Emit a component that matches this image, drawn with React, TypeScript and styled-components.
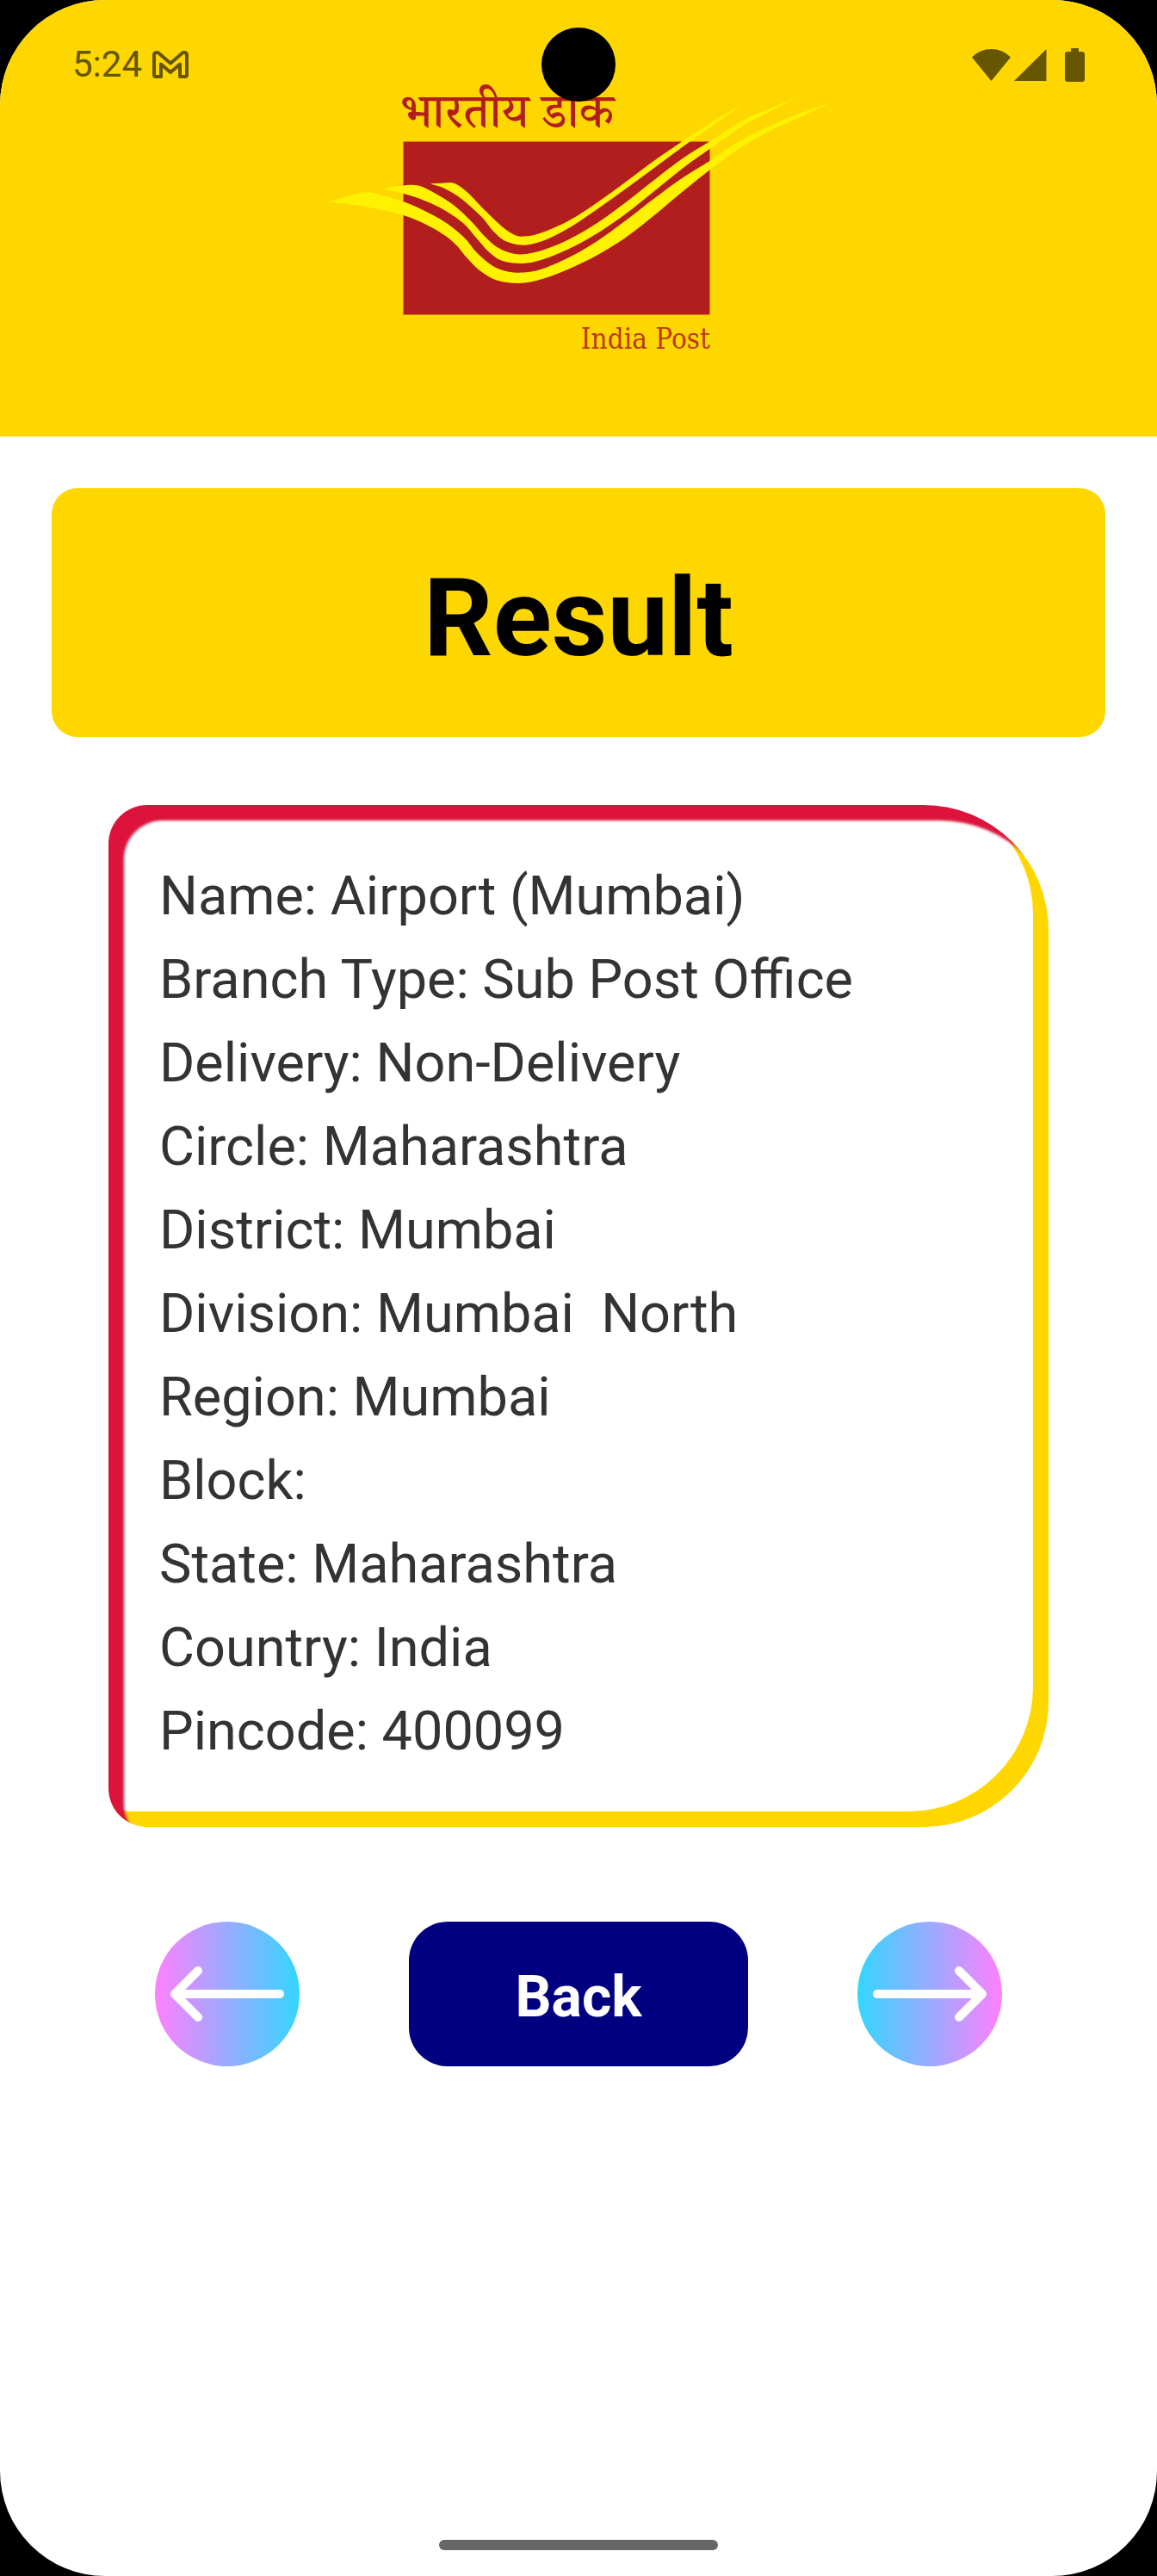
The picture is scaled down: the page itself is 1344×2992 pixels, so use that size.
import React from "react";
import styled, { createGlobalStyle } from "styled-components";

const GOLD = "#ffd700";
const STATUS = "#665600";
const POST_RED = "#b11e1d";

const GlobalStyle = createGlobalStyle`
  * { box-sizing: border-box; }
  body { margin: 0; background: #000; }
`;

const Screen = styled.div`
  position: relative;
  display: flex;
  flex-direction: column;
  min-height: 100vh;
  overflow: hidden;
  background: #fff;
  border-radius: 122px;
  font-family: Roboto, "Noto Sans", sans-serif;
`;

const StatusBar = styled.div`
  position: absolute;
  inset: 0 0 auto;
  z-index: 1;
  display: flex;
  align-items: center;
  justify-content: space-between;
  height: 150px;
  padding: 0 84px;
  color: ${STATUS};
`;

const StatusGroup = styled.div`
  display: flex;
  align-items: center;
`;

const Clock = styled.time`
  margin-right: 12px;
  font-size: 42px;
  line-height: 50px;
`;

const Camera = styled.div`
  position: absolute;
  top: 32px;
  left: 50%;
  width: 86px;
  height: 86px;
  margin-left: -43px;
  border-radius: 50%;
  background: #000;
`;

const Header = styled.header`
  display: flex;
  justify-content: center;
  padding: 90px 0 93px;
  background: ${GOLD};
`;

const Logo = styled.svg`
  display: block;
  width: 588px;
  height: 324px;
`;

const Main = styled.main`
  display: flex;
  flex: 1;
  flex-direction: column;
  padding: 60px;
`;

const Title = styled.h1`
  margin: 0;
  padding: 67px 0 53px;
  border-radius: 30px;
  background: ${GOLD};
  color: #000;
  font-size: 126px;
  font-weight: 700;
  line-height: 169px;
  text-align: center;
`;

const Details = styled.ul`
  margin: 79px 66px 0;
  padding: 57px 60px 63px 59px;
  border-radius: 45px 145px 145px 45px;
  background: #fff;
  box-shadow: inset 18px 18px 3px #dc143c, inset -18px -18px 0 ${GOLD};
  color: #333;
  font-size: 63px;
  line-height: 97px;
  list-style: none;
`;

const Detail = styled.li`
  white-space: pre-wrap;
`;

const Controls = styled.nav`
  display: flex;
  align-items: stretch;
  justify-content: space-between;
  height: 168px;
  margin: 110px 120px 0;
`;

const RoundButton = styled.button<{ $from: string; $to: string }>`
  width: 168px;
  height: 168px;
  padding: 0;
  border: 0;
  border-radius: 50%;
  background: linear-gradient(90deg, ${(p) => p.$from}, ${(p) => p.$to});
  cursor: pointer;
  svg { display: block; }
`;

const BackButton = styled.button`
  padding: 6px 123px 0;
  border: 0;
  border-radius: 45px;
  background: #000080;
  color: #fff;
  font: 700 66px Roboto, sans-serif;
  cursor: pointer;
`;

const HomeIndicator = styled.div`
  align-self: center;
  width: 324px;
  height: 12px;
  margin-bottom: 30px;
  border-radius: 6px;
  background: #666;
`;

type Point = [number, number];

/* Runs a smooth curve through the points of one edge of a ribbon. */
function curve(points: Point[]): string {
  let d = "";
  for (let i = 0; i < points.length - 1; i++) {
    const p0 = points[i - 1] ?? points[i];
    const p1 = points[i];
    const p2 = points[i + 1];
    const p3 = points[i + 2] ?? p2;
    d += `C${p1[0] + (p2[0] - p0[0]) / 6} ${p1[1] + (p2[1] - p0[1]) / 6} ${p2[0] - (p3[0] - p1[0]) / 6} ${
      p2[1] - (p3[1] - p1[1]) / 6
    } ${p2[0]} ${p2[1]}`;
  }
  return d;
}

function ribbon(upper: Point[], lower: Point[]): string {
  return `M${upper[0][0]} ${upper[0][1]}${curve(upper)}${curve([upper[upper.length - 1], ...lower])}Z`;
}

const RIBBONS = [
  ribbon(
    [[500, 213.5], [514, 212.7], [528, 213], [543, 223.5], [563, 244], [583, 263], [597, 272.5], [608, 274.6], [627, 271], [660, 256.7], [693, 235.7], [727, 211.3], [760, 186.5], [793, 164], [827, 141.5], [861, 122.5]],
    [[827, 146.5], [800, 165.5], [760, 195], [727, 219.3], [693, 243.5], [660, 265.3], [630, 280], [607, 284.7], [587, 280], [573, 268.5], [560, 252.5], [537, 231.7], [517, 219.3], [500, 213.5]],
  ),
  ribbon(
    [[445, 219.3], [466, 215.7], [485, 215.3], [503, 223.3], [527, 238.3], [547, 256.7], [563, 274.5], [577, 286.7], [593, 293.8], [608, 295.2], [630, 290.7], [660, 278.5], [693, 259.5], [727, 235], [760, 209], [793, 184], [824, 164.5], [860, 141.7], [893, 126.5], [925, 114]],
    [[893, 130], [865, 145], [824, 173.3], [793, 195.5], [760, 222], [727, 248.3], [693, 271.5], [660, 289.5], [630, 301.5], [607, 306], [583, 302.7], [567, 291.7], [553, 276], [537, 258.3], [513, 242.3], [490, 231.7], [469, 225], [445, 219.3]],
  ),
  ribbon(
    [[381.5, 235], [403, 228], [425, 223.3], [443, 226.7], [469, 234.3], [497, 246.7], [520, 260], [540, 276.7], [553, 292.5], [570, 307.3], [585, 314.3], [603, 316.7], [627, 313.3], [660, 299.5], [693, 280.5], [727, 256], [760, 230.5], [793, 206.5], [824, 187.3], [860, 163.3], [893, 146.7], [927, 132.7], [964, 120]],
    [[927, 137], [893, 152.5], [860, 172], [824, 197.7], [793, 222.5], [760, 250], [727, 275.7], [693, 296.7], [660, 312.7], [630, 324], [603, 329], [577, 325.5], [557, 314], [542, 299], [527, 281.7], [503, 265], [470, 250.5], [430, 241], [403, 236.7], [381.5, 235]],
  ),
];

const PostLogo = () => (
  <Logo viewBox="378 90 588 324" role="img" aria-label="India Post">
    <text x="465" y="148" fill={POST_RED} fontSize="56" fontWeight="500" fontFamily='"Noto Serif Devanagari", "Noto Sans Devanagari", "Noto Sans", serif'>
      भारतीय डाक
    </text>
    <rect x="468.5" y="164.5" width="356" height="201" fill={POST_RED} />
    {RIBBONS.map((d) => (
      <path key={d} d={d} fill="#fff200" />
    ))}
    <text x="825" y="405" fill="#bd3717" fontSize="33" textAnchor="end" fontFamily='"DejaVu Serif Condensed", "Liberation Serif", serif'>
      India Post
    </text>
  </Logo>
);

const MailIcon = () => (
  <svg width="42" height="32" viewBox="0 0 42 32" fill="none" stroke="currentColor" strokeWidth="4" strokeLinejoin="round">
    <path d="M2 28V5Q2 2 5 2H6.500L21 14.500L35.500 2H37Q40 2 40 5V28Q40 30 38 30H32V15.500L21 25L10 15.500V30H4Q2 30 2 28Z" />
  </svg>
);

const SignalIcons = () => (
  <svg width="131" height="39" viewBox="0 0 131 39" fill="currentColor">
    <path d="M0 10.500Q9 1 22.500 1T45 10.500L22.500 38Z" />
    <path d="M49 38L86.500 1V38Z" />
    <path d="M115 0h9v4h4q3 0 3 3v29q0 3-3 3h-17q-3 0-3-3V7q0-3 3-3h4Z" />
  </svg>
);

const ArrowIcon = ({ flip = false }: { flip?: boolean }) => (
  <svg width="168" height="168" viewBox="0 0 168 168" fill="none" stroke="#fff" strokeWidth="10" strokeLinecap="round" strokeLinejoin="round">
    <path d={flip ? "M23 84H145M118 57L145 84L118 111" : "M145 84H23M50 57L23 84L50 111"} />
  </svg>
);

const DETAILS = [
  ["Name", "Airport (Mumbai)"],
  ["Branch Type", "Sub Post Office"],
  ["Delivery", "Non-Delivery"],
  ["Circle", "Maharashtra"],
  ["District", "Mumbai"],
  ["Division", "Mumbai  North"],
  ["Region", "Mumbai"],
  ["Block", ""],
  ["State", "Maharashtra"],
  ["Country", "India"],
  ["Pincode", "400099"],
];

export default function App() {
  return (
    <>
      <GlobalStyle />
      <Screen>
        <StatusBar>
          <StatusGroup>
            <Clock>5:24</Clock>
            <MailIcon />
          </StatusGroup>
          <Camera />
          <SignalIcons />
        </StatusBar>
        <Header>
          <PostLogo />
        </Header>
        <Main>
          <Title>Result</Title>
          <Details>
            {DETAILS.map(([label, value]) => (
              <Detail key={label}>{`${label}: ${value}`}</Detail>
            ))}
          </Details>
          <Controls>
            <RoundButton $from="#ff80ff" $to="#33d6ff" aria-label="Previous result">
              <ArrowIcon />
            </RoundButton>
            <BackButton>Back</BackButton>
            <RoundButton $from="#33d6ff" $to="#ff80ff" aria-label="Next result">
              <ArrowIcon flip />
            </RoundButton>
          </Controls>
        </Main>
        <HomeIndicator />
      </Screen>
    </>
  );
}
